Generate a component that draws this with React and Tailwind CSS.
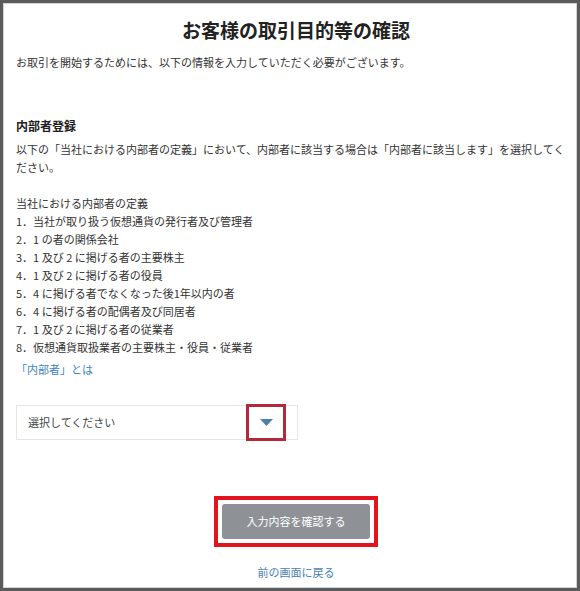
const items = [
  "1．当社が取り扱う仮想通貨の発行者及び管理者",
  "2．1 の者の関係会社",
  "3．1 及び 2 に掲げる者の主要株主",
  "4．1 及び 2 に掲げる者の役員",
  "5．4 に掲げる者でなくなった後1年以内の者",
  "6．4 に掲げる者の配偶者及び同居者",
  "7．1 及び 2 に掲げる者の従業者",
  "8．仮想通貨取扱業者の主要株主・役員・従業者",
];

export default function App() {
  return (
    <div
      className="w-[580px] h-[591px] bg-[#5b5b5b] pt-[3px] pl-[3px] pr-[3px] pb-[3px] overflow-hidden"
      style={{ fontFamily: '"Noto Sans CJK JP", "Noto Sans", sans-serif' }}
    >
      <div className="h-full bg-white border border-[#d4d4d4] pl-[12px] flex flex-col text-[#333]">
        <h1 className="mt-[13px] text-center text-[19px] leading-[26px] font-bold text-[#222]">
          お客様の取引目的等の確認
        </h1>
        <p className="mt-[10px] text-[11px] leading-[18px]">
          お取引を開始するためには、以下の情報を入力していただく必要がございます。
        </p>

        <h2 className="mt-[46px] text-[12px] leading-[18px] font-bold text-[#222]">内部者登録</h2>
        <p className="mt-[5px] pr-[6px] text-[11px] leading-[18px]">
          以下の「当社における内部者の定義」において、内部者に該当する場合は「内部者に該当します」を選択してください。
        </p>

        <div className="mt-[18px] text-[11px] leading-[18px]">
          <p>当社における内部者の定義</p>
          {items.map((t) => (
            <p key={t}>{t}</p>
          ))}
        </div>
        <a className="mt-[4px] text-[11px] leading-[18px] text-[#3d84c4]">「内部者」とは</a>

        <div className="mt-[27px] relative w-[282px] h-[35px] border border-[#e6e6e6] flex items-center pl-[11px] text-[11px] text-[#444]">
          選択してください
          <div className="absolute left-[229px] top-[-2px] w-[40px] h-[37px] border-[3px] border-[#b3283a] flex items-center justify-center">
            <svg width="13" height="7" viewBox="0 0 13 7">
              <path d="M0 0 L13 0 L6.5 7 Z" fill="#4f7fa8" />
            </svg>
          </div>
        </div>

        <div className="mt-[56px] flex justify-center">
          <div className="border-[4px] border-[#e3141c] p-[4px]">
            <button className="w-[148px] h-[35px] rounded-[3px] bg-[#8e9297] text-white text-[11px]">
              入力内容を確認する
            </button>
          </div>
        </div>

        <div className="mt-[16px] text-center text-[11px] leading-[18px] text-[#4a7fb5]">
          前の画面に戻る
        </div>
      </div>
    </div>
  );
}
